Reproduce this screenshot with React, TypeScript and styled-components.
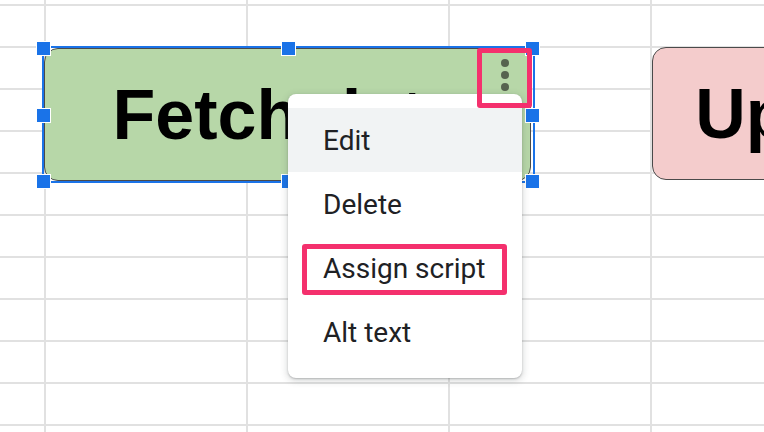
import React from "react";
import styled, { createGlobalStyle } from "styled-components";

const GlobalStyle = createGlobalStyle`
  html, body { margin: 0; padding: 0; background: #ffffff; }
  body { font-family: "Liberation Sans", Arial, sans-serif; }
`;

const Sheet = styled.div`
  position: relative;
  width: 764px;
  height: 432px;
  overflow: hidden;
  box-sizing: border-box;
  padding: 46px 0 0 42px;
  display: flex;
  align-items: flex-start;
  gap: 117px;
  background-color: #ffffff;
  background-image:
    linear-gradient(to right, #e1e1e1 2px, transparent 2px),
    linear-gradient(to bottom, #e1e1e1 2px, transparent 2px);
  background-size: 202px 42px;
  background-position: 44px 4px;
`;

const Selection = styled.div`
  position: relative;
  flex: none;
  display: flex;
  padding-right: 2px;
  border: 2px solid #1a73e8;
`;

const Drawing = styled.div<{ $fill: string; $offset?: number }>`
  position: relative;
  flex: none;
  width: 487px;
  height: 133px;
  margin-top: ${(p) => p.$offset ?? 0}px;
  box-sizing: border-box;
  border: 1px solid #4a4a4a;
  border-radius: 14px;
  background: ${(p) => p.$fill};
  display: flex;
  align-items: center;
  justify-content: center;
  white-space: nowrap;
  font-family: "Liberation Sans", Arial, sans-serif;
  font-weight: 700;
  font-size: 70px;
  color: #000;
`;

const Handle = styled.span<{ $x: string; $y: string }>`
  position: absolute;
  left: ${(p) => p.$x};
  top: ${(p) => p.$y};
  width: 15px;
  height: 15px;
  box-sizing: border-box;
  margin: -7px 0 0 -8px;
  background: #1a73e8;
  border: 1px solid #ffffff;
  z-index: 1;
`;

const Kebab = styled.div`
  position: absolute;
  right: 21px;
  top: 10px;
  display: flex;
  flex-direction: column;
  align-items: center;
  gap: 4px;
`;

const Dot = styled.span`
  width: 8px;
  height: 8px;
  border-radius: 50%;
  background: #56634f;
`;

const Menu = styled.ul`
  position: absolute;
  left: 288px;
  top: 94px;
  width: 234px;
  margin: 0;
  padding: 14px 0;
  list-style: none;
  background: #ffffff;
  border-radius: 8px;
  z-index: 2;
  box-shadow: 0 2px 6px 2px rgba(60, 64, 67, 0.15), 0 1px 2px rgba(60, 64, 67, 0.3);
`;

const MenuItem = styled.li<{ $active?: boolean }>`
  position: relative;
  height: 64px;
  display: flex;
  align-items: center;
  padding-left: 35px;
  font-family: Roboto, "Noto Sans", sans-serif;
  font-size: 28px;
  color: #202124;
  background: ${(p) => (p.$active ? "#f1f3f4" : "transparent")};
`;

const ItemCallout = styled.span`
  position: absolute;
  left: 14px;
  right: 15px;
  top: 8px;
  bottom: 5px;
  border: 5px solid #f4306d;
  border-radius: 3px;
`;

const KebabCallout = styled.div`
  position: absolute;
  left: 477px;
  top: 48px;
  width: 55px;
  height: 60px;
  box-sizing: border-box;
  border: 5px solid #f4306d;
  border-radius: 3px;
  z-index: 3;
`;

const handles: [string, string][] = [
  ["0%", "0%"],
  ["50%", "0%"],
  ["100%", "0%"],
  ["0%", "50%"],
  ["100%", "50%"],
  ["0%", "100%"],
  ["50%", "100%"],
  ["100%", "100%"],
];

export default function App() {
  return (
    <>
      <GlobalStyle />
      <Sheet>
        <Selection>
          <Drawing $fill="#b7d7a8">
            Fetch data
            <Kebab>
              <Dot />
              <Dot />
              <Dot />
            </Kebab>
          </Drawing>
          {handles.map(([x, y], i) => (
            <Handle key={i} $x={x} $y={y} />
          ))}
        </Selection>
        <Drawing $fill="#f4cccc" $offset={1}>
          Update data
        </Drawing>
        <Menu>
          <MenuItem $active>Edit</MenuItem>
          <MenuItem>Delete</MenuItem>
          <MenuItem>
            Assign script
            <ItemCallout />
          </MenuItem>
          <MenuItem>Alt text</MenuItem>
        </Menu>
        <KebabCallout />
      </Sheet>
    </>
  );
}
